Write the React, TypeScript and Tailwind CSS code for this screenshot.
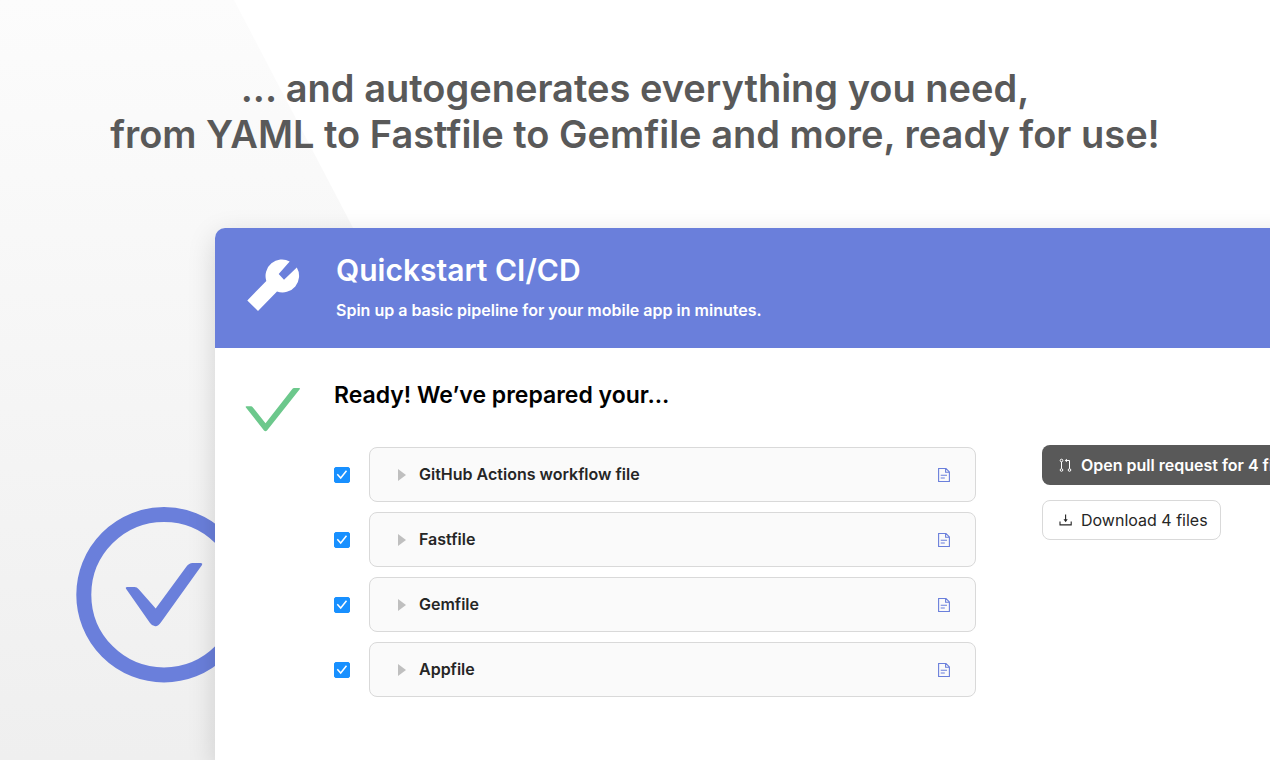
import React, { useState } from 'react';

const FILES = ['GitHub Actions workflow file', 'Fastfile', 'Gemfile', 'Appfile'];

const Backdrop = () => (
    <div className="absolute inset-0 overflow-hidden" aria-hidden="true">
        <div className="absolute inset-y-0 left-0 w-[631px] bg-linear-to-b from-[#fcfcfc] to-[#efefef] [clip-path:polygon(0_0,234px_0,631px_760px,631px_100%,0_100%)]"></div>
        <svg className="absolute top-[507px] left-[76px] w-[176px] h-[176px]" viewBox="0 0 176 176" fill="none">
            <circle cx="88" cy="87.7" r="80.2" stroke="#6a7fdb" strokeWidth="15" />
            <path
                d="M51.2 80H58.5Q61 80 62.5 82L79.7 101.5L110.5 59.5Q113 56 116.5 56H125Q127 56.3 126 58L85 115.3Q82 119.5 79.5 119.3Q76.5 119.5 74 116L50.2 82Q49 80.2 51.2 80Z"
                fill="#6a7fdb"
            />
        </svg>
    </div>
);

const WrenchIcon = () => (
    <svg className="w-[53px] h-[53px]" viewBox="0 0 53 53" fill="currentColor" aria-hidden="true">
        <path d="M0.3 41.5L19.3 22A16.5 16.5 0 0 1 42.7 2.4L31.7 15L37 20.7L49.8 8.5A16.5 16.5 0 0 1 30 32.4L11 52Z" />
    </svg>
);

const CheckIcon = () => (
    <svg className="w-[56px] h-[45px] text-[#6cc88c]" viewBox="0 0 56 45" fill="currentColor" aria-hidden="true">
        <path d="M1.5 19.2H6.2Q7 19.2 7.5 20L20.5 36.2L47.5 1.8Q48.1 1.1 49 1.1H54.2Q55.5 1.2 54.7 2.2L22 43.5Q20.5 45 19 43.5L0.9 20.5Q0.2 19.3 1.5 19.2Z" />
    </svg>
);

const FileTextIcon = () => (
    <svg className="w-4 h-4" viewBox="0 0 16 16" fill="none" stroke="currentColor" strokeWidth="1.1" aria-hidden="true">
        <path d="M2.6 1.5H10L13.4 4.9V14.5H2.6ZM9.6 1.5V5.3H13.4M4.7 8.2H11M4.7 11H8.8" />
    </svg>
);

const PullRequestIcon = () => (
    <svg className="w-[15px] h-4" viewBox="0 0 15 16" fill="none" stroke="currentColor" strokeWidth="1" aria-hidden="true">
        <circle cx="3.5" cy="3.5" r="1.3" />
        <circle cx="3.5" cy="13" r="1.3" />
        <circle cx="11.5" cy="13" r="1.3" />
        <path d="M3.5 4.8V11.7M11.5 11.7V3.5H8" />
        <path d="M9 1.7V5.3L6.7 3.5Z" fill="currentColor" stroke="none" />
    </svg>
);

const DownloadIcon = () => (
    <svg className="w-[15px] h-4" viewBox="0 0 15 16" fill="none" stroke="currentColor" strokeWidth="1.1" aria-hidden="true">
        <path d="M2 9.500V12.900H13.200V9.500M7.600 2.500V8" />
        <path d="M5.500 7.200H9.700L7.600 10.200Z" fill="currentColor" stroke="none" />
    </svg>
);

interface FileRowProps {
    name: string;
    checked: boolean;
    onToggle: () => void;
}

const FileRow = ({ name, checked, onToggle }: FileRowProps) => (
    <li className="flex items-center gap-[19px]">
        <span className="grid shrink-0">
            <input
                type="checkbox"
                aria-label={name}
                checked={checked}
                onChange={onToggle}
                className="peer col-start-1 row-start-1 w-4 h-4 appearance-none rounded-xs border border-[#d9d9d9] checked:border-[#1890ff] checked:bg-[#1890ff]"
            />
            <svg className="pointer-events-none col-start-1 row-start-1 w-4 h-4 opacity-0 peer-checked:opacity-100" viewBox="0 0 16 16" fill="none" stroke="white" strokeWidth="1.5">
                <path d="M3.3 7.2L6.7 11L12.5 3.8" />
            </svg>
        </span>
        <div className="flex flex-1 items-center rounded-lg border border-[#d9d9d9] bg-[#fafafa] pr-[23px]">
            <button type="button" className="flex flex-1 items-center gap-[13px] py-[15px] pl-7 text-left text-base leading-[23px] font-semibold text-[#262626]">
                <svg className="w-2 h-3" viewBox="0 0 8 12" fill="#bfbfbf" aria-hidden="true">
                    <path d="M0 0L8 6L0 12Z" />
                </svg>
                {name}
            </button>
            <button type="button" aria-label={`View ${name}`} className="text-[#6a7fdb]">
                <FileTextIcon />
            </button>
        </div>
    </li>
);

export default function App() {
    const [selected, setSelected] = useState<string[]>(FILES);

    const toggle = (name: string) =>
        setSelected(selected.includes(name) ? selected.filter((f) => f !== name) : [...selected, name]);

    return (
        <div className="relative flex min-h-screen flex-col overflow-hidden bg-white font-['Inter',sans-serif]">
            <Backdrop />
            <h1 className="relative pt-[65px] text-center text-[38px] leading-[46px] font-semibold text-[#595959]">
                ... and autogenerates everything you need,
                <br />
                from YAML to Fastfile to Gemfile and more, ready for use!
            </h1>

            {/* the panel runs past the right edge of the window */}
            <main className="relative mt-[71px] -mr-10 ml-[215px] flex-1 rounded-tl-[10px] bg-white shadow-[0_8px_28px_rgba(0,0,0,0.15)]">
                <header className="flex h-[120px] rounded-tl-[10px] bg-[#6a7fdb] pl-8 text-white">
                    <div className="w-[89px] shrink-0 pt-[31px]">
                        <WrenchIcon />
                    </div>
                    <div className="pt-6">
                        <h2 className="text-[30px] leading-9 font-semibold">Quickstart CI/CD</h2>
                        <p className="mt-[10px] text-base leading-6 font-semibold">Spin up a basic pipeline for your mobile app in minutes.</p>
                    </div>
                </header>

                <div className="flex pt-8 pl-[30px]">
                    <div className="w-[89px] shrink-0 pt-[7px]">
                        <CheckIcon />
                    </div>
                    <div className="flex-1">
                        <h3 className="text-[23px] leading-[30px] font-semibold text-black">Ready! We’ve prepared your...</h3>
                        <div className="mt-[35px] flex items-start gap-[66px]">
                            <ul className="flex flex-1 flex-col gap-[10px] pt-[2px]">
                                {FILES.map((name) => (
                                    <FileRow key={name} name={name} checked={selected.includes(name)} onToggle={() => toggle(name)} />
                                ))}
                            </ul>
                            <div className="flex w-[268px] shrink-0 flex-col items-start gap-[15px]">
                                <button type="button" className="flex h-10 items-center gap-2 rounded-lg bg-[#595959] px-4 text-base font-semibold whitespace-nowrap text-white">
                                    <PullRequestIcon />
                                    Open pull request for {selected.length} files
                                </button>
                                <button type="button" className="flex h-10 items-center gap-2 rounded-lg border border-[#d9d9d9] bg-white pr-3 pl-[15px] text-base whitespace-nowrap text-[#262626]">
                                    <DownloadIcon />
                                    Download {selected.length} files
                                </button>
                            </div>
                        </div>
                    </div>
                </div>
            </main>
        </div>
    );
}
